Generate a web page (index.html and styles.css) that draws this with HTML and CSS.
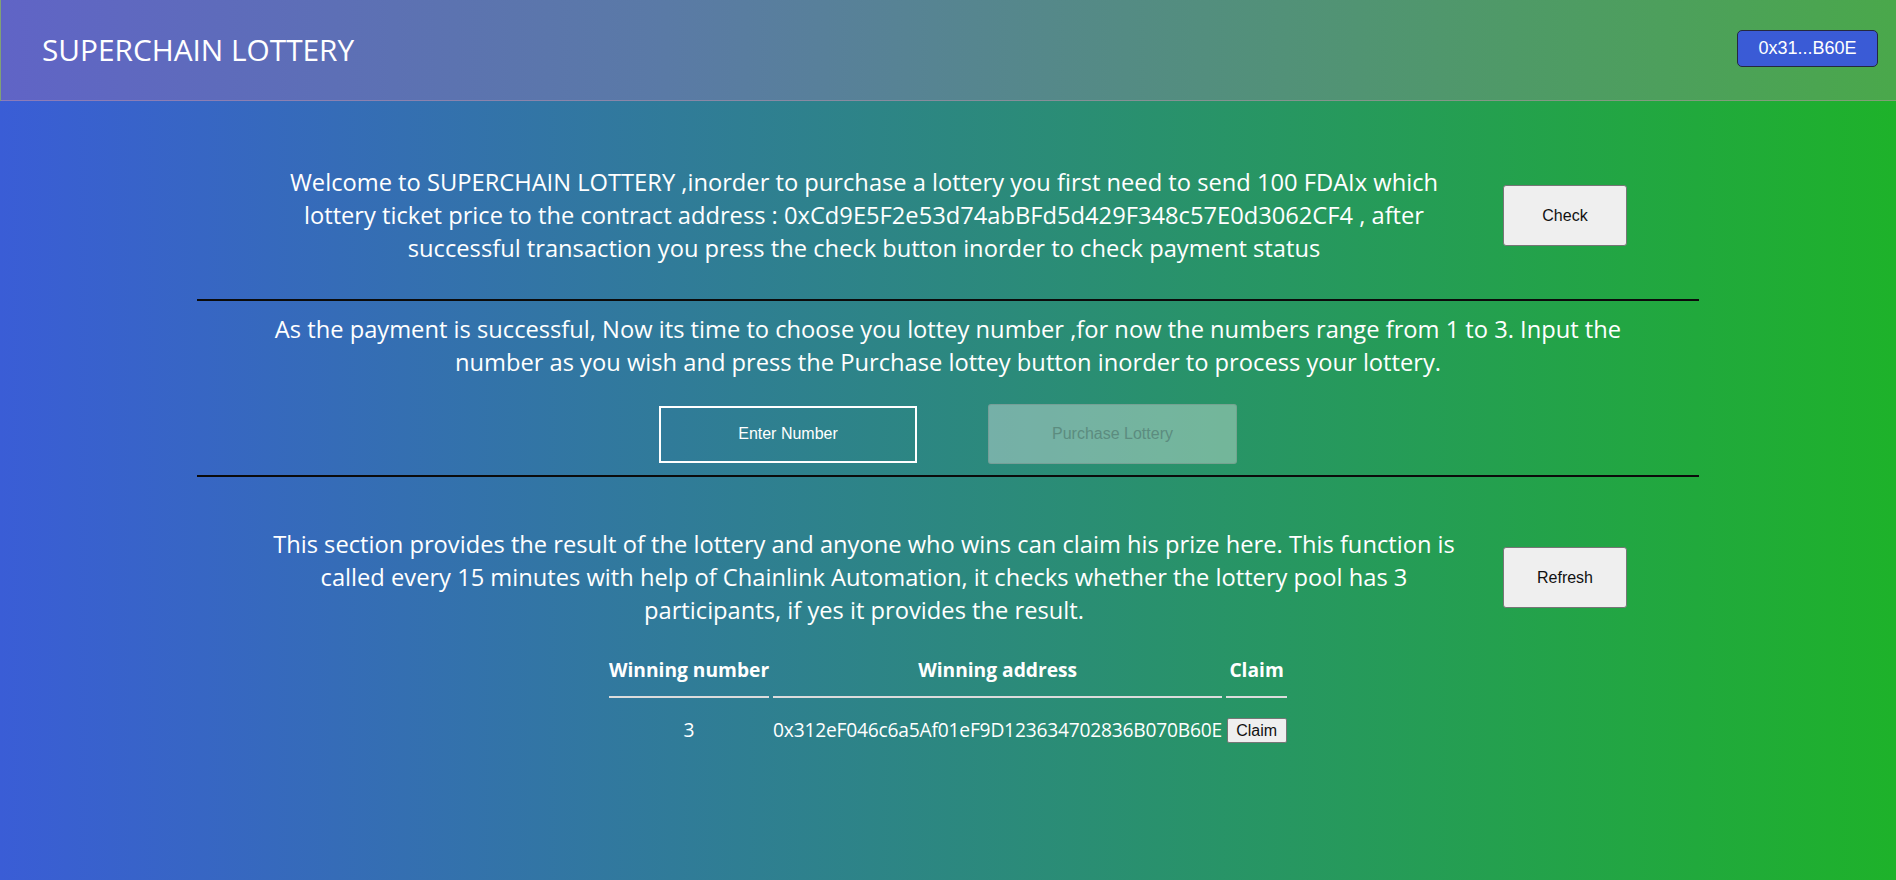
FILE: index.html
```html
<!DOCTYPE html>
<html lang="en">
<head>
<meta charset="utf-8">
<title>SUPERCHAIN LOTTERY</title>
<link rel="stylesheet" href="styles.css">
</head>
<body>
<header class="topbar">
  <h1 class="brand">SUPERCHAIN LOTTERY</h1>
  <button class="wallet">0x31...B60E</button>
</header>
<main class="content">
  <section class="row intro">
    <p class="lead">Welcome to SUPERCHAIN LOTTERY ,inorder to purchase a lottery you first need to send 100 FDAIx which<br>lottery ticket price to the contract address : 0xCd9E5F2e53d74abBFd5d429F348c57E0d3062CF4 , after<br>successful transaction you press the check button inorder to check payment status</p>
    <button class="btn">Check</button>
  </section>
  <div class="rule rule-top"></div>
  <section class="purchase">
    <p class="lead lead-wide">As the payment is successful, Now its time to choose you lottey number ,for now the numbers range from 1 to 3. Input the<br>number as you wish and press the Purchase lottey button inorder to process your lottery.</p>
    <div class="controls">
      <input class="number-input" type="text" placeholder="Enter Number">
      <button class="btn-purchase" disabled>Purchase Lottery</button>
    </div>
  </section>
  <div class="rule rule-bottom"></div>
  <section class="row results">
    <p class="lead">This section provides the result of the lottery and anyone who wins can claim his prize here. This function is<br>called every 15 minutes with help of Chainlink Automation, it checks whether the lottery pool has 3<br>participants, if yes it provides the result.</p>
    <button class="btn">Refresh</button>
  </section>
  <table class="winners">
    <thead>
      <tr>
        <th class="col-num">Winning number</th>
        <th class="col-addr">Winning address</th>
        <th class="col-claim">Claim</th>
      </tr>
    </thead>
    <tbody>
      <tr>
        <td>3</td>
        <td class="addr">0x312eF046c6a5Af01eF9D123634702836B070B60E</td>
        <td><button class="claim">Claim</button></td>
      </tr>
    </tbody>
  </table>
</main>
</body>
</html>
```
FILE: styles.css
```css
html, body {
  margin: 0;
  padding: 0;
}

body {
  min-height: 100vh;
  background: linear-gradient(to right, #3a5dd6 0%, #1eb22a 100%);
  font-family: "Open Sans", "Noto Sans", sans-serif;
  color: #ffffff;
}

.topbar {
  display: flex;
  align-items: center;
  justify-content: space-between;
  box-sizing: border-box;
  height: 101px;
  padding: 0 18px 0 41px;
  background: linear-gradient(to right, #6064c6 0%, #5a7aa6 35%, #4aa84b 100%);
  border: 1px solid rgba(196, 150, 170, 0.45);
  border-top: none;
  border-right: none;
}

.brand {
  margin: 0;
  font-size: 29.8px;
  font-weight: 400;
  line-height: 1;
  color: #ffffff;
}

.wallet {
  box-sizing: border-box;
  width: 141px;
  height: 37px;
  margin-bottom: 3px;
  padding: 0;
  background: #3a5bd6;
  border: 1px solid #25283f;
  border-radius: 5px;
  color: #ffffff;
  font: 18px "Liberation Sans", Arial, sans-serif;
}

.content {
  width: 1502px;
  margin: 0 auto;
}

.row {
  display: flex;
  align-items: center;
  justify-content: center;
  gap: 44px;
}

.intro {
  padding-top: 65px;
}

.lead {
  margin: 0;
  width: 1190px;
  font-size: 23.7px;
  line-height: 33px;
  text-align: center;
  white-space: nowrap;
}

.lead-wide {
  width: auto;
}

.btn {
  flex: none;
  box-sizing: border-box;
  width: 124px;
  height: 61px;
  padding: 0;
  background: #efefef;
  border: 1px solid #767676;
  border-radius: 3px;
  color: #111111;
  font: 16px "Liberation Sans", Arial, sans-serif;
}

.rule {
  height: 2px;
  background: #0b0b0b;
}

.rule-top {
  margin-top: 34px;
}

.rule-bottom {
  margin-top: 11px;
}

.purchase {
  padding-top: 12px;
}

.controls {
  display: flex;
  align-items: center;
  justify-content: center;
  gap: 71px;
  margin-top: 25px;
}

.number-input {
  box-sizing: border-box;
  width: 258px;
  height: 57px;
  padding: 0;
  background: transparent;
  border: 2px solid #ffffff;
  color: #ffffff;
  text-align: center;
  font: 16px "Liberation Sans", Arial, sans-serif;
  outline: none;
}

.number-input::placeholder {
  color: #ffffff;
  opacity: 1;
}

.btn-purchase {
  box-sizing: border-box;
  width: 249px;
  height: 60px;
  padding: 0;
  background: rgba(239, 239, 239, 0.38);
  border: 1px solid rgba(118, 118, 118, 0.3);
  border-radius: 3px;
  color: #5c8c7f;
  font: 16px "Liberation Sans", Arial, sans-serif;
}

.results {
  padding-top: 51px;
}

.winners {
  margin: 29px auto 0;
  border-collapse: separate;
  border-spacing: 4px 0;
  font-size: 19.2px;
  color: #ffffff;
}

.winners th {
  padding: 0 0 13px;
  font-weight: 700;
  line-height: 27px;
  border-bottom: 2px solid #dcdcdc;
  white-space: nowrap;
}

.col-num {
  width: 159px;
}

.col-addr {
  width: 448px;
}

.col-claim {
  width: 61px;
}

.winners td {
  padding: 17px 0 0;
  line-height: 27px;
  text-align: center;
  white-space: nowrap;
}

.winners .addr {
  letter-spacing: -0.2px;
}

.claim {
  box-sizing: border-box;
  width: 60px;
  height: 25px;
  padding: 0;
  vertical-align: middle;
  background: #efefef;
  border: 1px solid #767676;
  border-radius: 2px;
  color: #111111;
  font: 16px "Liberation Sans", Arial, sans-serif;
}
```
